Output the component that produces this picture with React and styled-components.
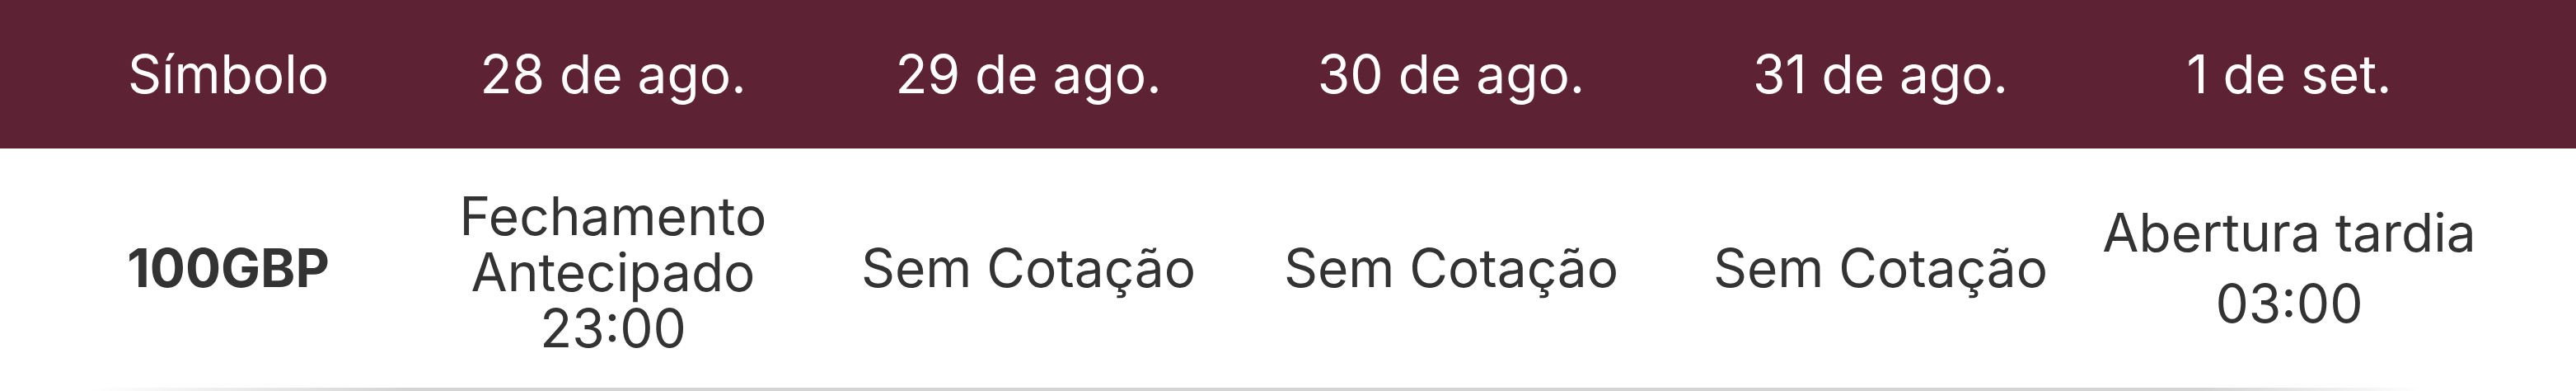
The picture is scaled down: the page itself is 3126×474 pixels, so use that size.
import React from "react";
import styled, { createGlobalStyle } from "styled-components";

const Global = createGlobalStyle`
  html, body { margin: 0; padding: 0; background: #ffffff; }
  body { font-family: "Inter", "Roboto", "Noto Sans", sans-serif; -webkit-font-smoothing: antialiased; }
`;

const Table = styled.div`
  width: 3126px;
  display: flex;
  flex-direction: column;
  background: #ffffff;
`;

const Row = styled.div`
  display: grid;
  grid-template-columns: 466px 468px 540px 486px 556px 436px;
  padding-left: 44px;
  height: ${(p) => p.$height}px;
  background: ${(p) => p.$bg};
  color: ${(p) => p.$color};
  align-items: center;
`;

const HeadCell = styled.div`
  display: flex;
  justify-content: center;
  font-size: 64px;
  font-weight: 400;
  line-height: 68px;
  white-space: nowrap;
`;

const Cell = styled.div`
  display: flex;
  flex-direction: column;
  align-items: center;
  gap: ${(p) => p.$gap || 0}px;
  padding-top: ${(p) => p.$shift || 0}px;
  font-size: 64px;
  font-weight: ${(p) => (p.$bold ? 700 : 400)};
  line-height: 68px;
  text-align: center;
  white-space: nowrap;
`;

const Line = styled.span`
  display: block;
`;

const Divider = styled.div`
  height: 4px;
  background: linear-gradient(
    90deg,
    rgba(212, 212, 212, 0) 3.5%,
    #d4d4d4 16%,
    #d4d4d4 85.5%,
    rgba(212, 212, 212, 0) 94%
  );
`;

const headers = ["Símbolo", "28 de ago.", "29 de ago.", "30 de ago.", "31 de ago.", "1 de set."];

export default function App() {
  return (
    <>
      <Global />
      <Table>
        <Row $height={180} $bg="#5d2334" $color="#ffffff">
          {headers.map((h) => (
            <HeadCell key={h}>{h}</HeadCell>
          ))}
        </Row>
        <Row $height={290} $bg="#ffffff" $color="#333333">
          <Cell $bold>100GBP</Cell>
          <Cell $shift={10}>
            <Line>Fechamento</Line>
            <Line>Antecipado</Line>
            <Line>23:00</Line>
          </Cell>
          <Cell>Sem Cotação</Cell>
          <Cell>Sem Cotação</Cell>
          <Cell>Sem Cotação</Cell>
          <Cell $gap={18}>
            <Line>Abertura tardia</Line>
            <Line>03:00</Line>
          </Cell>
        </Row>
        <Divider />
      </Table>
    </>
  );
}
